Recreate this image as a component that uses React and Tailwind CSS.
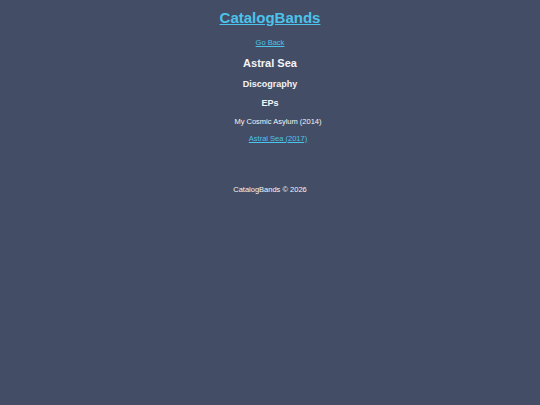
import React from 'react';

const App = () => {
  const eps = [
    { title: 'My Cosmic Asylum (2014)', link: false },
    { title: 'Astral Sea (2017)', link: true },
  ];

  return (
    <div className="min-h-screen w-full bg-[#434d66] text-[#f3f4f6] font-['Liberation_Sans',Arial,sans-serif] text-[7.5px] text-center">
      <header className="pt-[9px]">
        <a href="#" className="text-[15px] leading-[18px] font-bold text-[#4cc3ea] underline">
          CatalogBands
        </a>
      </header>

      <main className="flex flex-col items-center">
        <a href="#" className="mt-[10.5px] leading-[9px] text-[#4cc3ea] underline">
          Go Back
        </a>
        <h2 className="mt-[10px] text-[11px] leading-[13px] font-bold">Astral Sea</h2>
        <h3 className="mt-[9px] text-[9px] leading-[11px] font-bold">Discography</h3>
        <h4 className="mt-[8px] text-[9px] leading-[11px] font-bold">EPs</h4>
        <ul className="mt-[8px] flex flex-col gap-[8px] pl-[16px]">
          {eps.map((ep) => (
            <li key={ep.title} className="leading-[9px]">
              {ep.link ? (
                <a href="#" className="text-[#4cc3ea] underline">{ep.title}</a>
              ) : (
                ep.title
              )}
            </li>
          ))}
        </ul>
      </main>

      <footer className="mt-[42px] leading-[9px]">CatalogBands © 2026</footer>
    </div>
  );
};

export default App;
